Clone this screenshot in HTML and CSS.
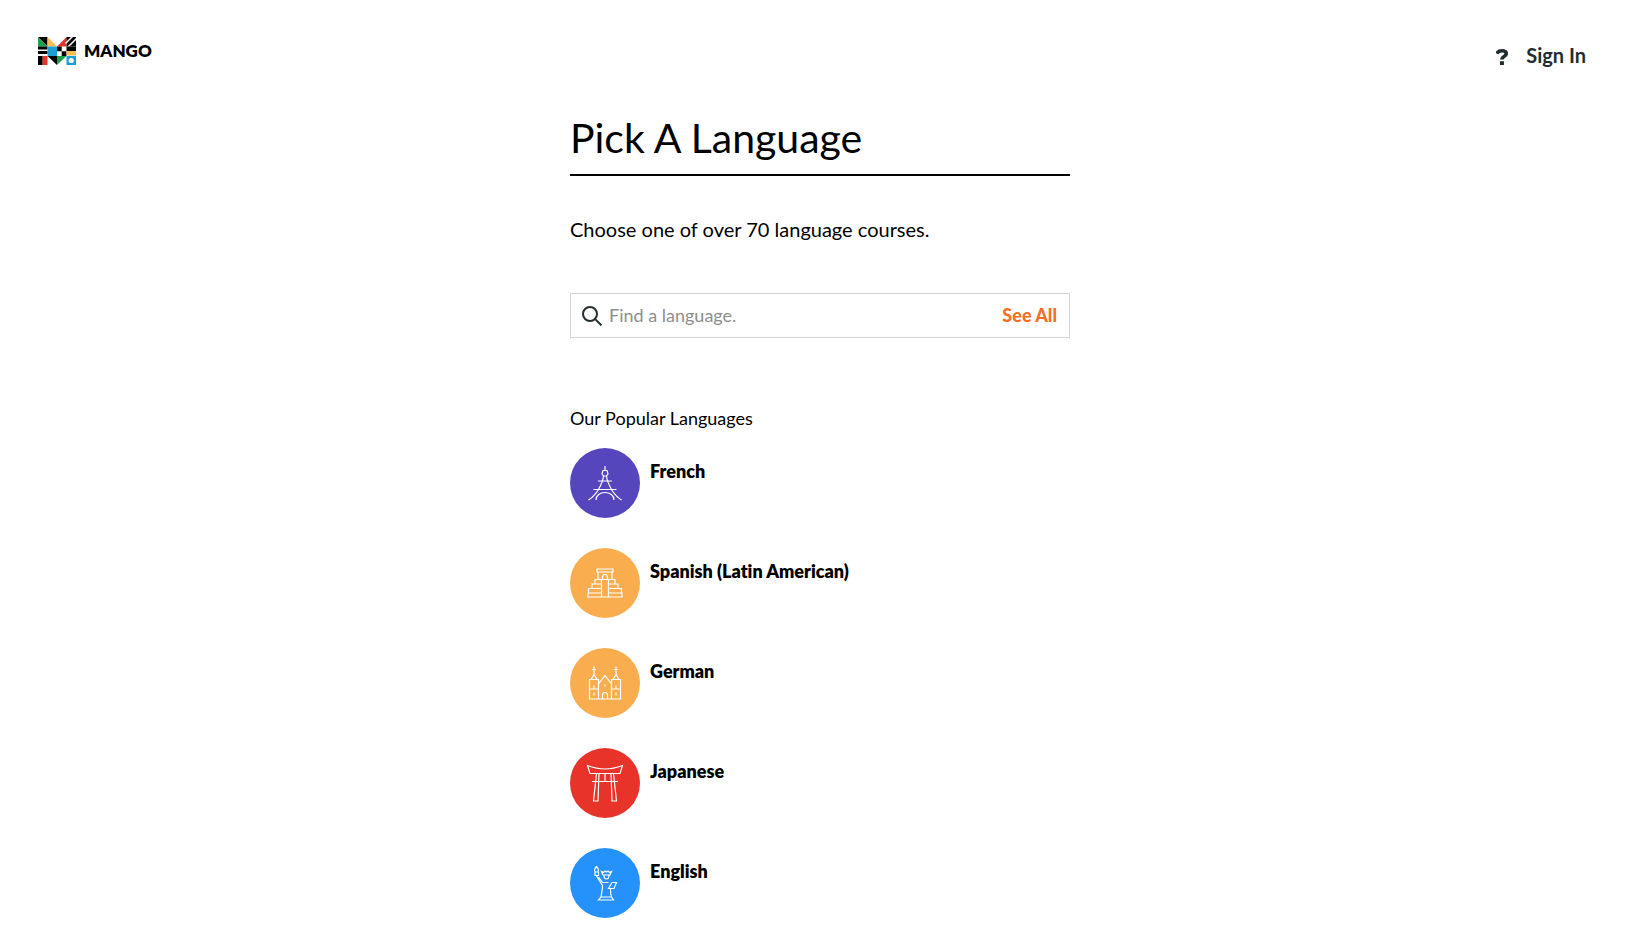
FILE: index.html
```
<!doctype html>
<html lang="en">
  <head>
    <title>Pick A Language</title>
    <meta name="viewport" content="width=device-width, initial-scale=1.0" />
    <meta charset="utf-8" />
    <link rel="stylesheet" href="styles.css">
  </head>
  <body>
    <header>
      <a class="logo" href="#">
        <svg width="38" height="28" viewBox="0 0 38 28" aria-hidden="true">
          <path d="M0 0h9.500v9.500z" />
          <path fill="#1fa04b" d="M0 0l9.500 9.500H0z" />
          <path fill="#fdbd56" d="M9.500 0l9.500 9.500H9.500z" />
          <path fill="#e8332a" d="M28.500 0v9.500H19z" />
          <path d="M28.500 0H38v9.500h-9.500z" />
          <path stroke="#fff" stroke-width="1.500" d="M27.500 6.500L34.500-.5M30 10L39 1" />
          <path d="M0 9.500h9.500v3H0zM0 14h9.500v3H0z" />
          <path fill="#1c9fd8" d="M9.500 9.500H19V19H9.500z" />
          <path d="M19 9.500h4.700v4.700H19zM23.700 14.200h4.800V19h-4.800z" />
          <path d="M28.500 9.500H38V14h-9.500z" />
          <path fill="#fdbd56" d="M28.500 14H38v4.500h-9.500z" />
          <path d="M0 19h4.700v9H0z" />
          <path fill="#e8332a" d="M4.700 19h4.800v9H4.700z" />
          <path d="M9.500 19H19v9z" />
          <path fill="#1fa04b" d="M19 19h9.500L19 28z" />
          <path fill="#1c9fd8" d="M28.500 19H38v9h-9.500z" />
          <circle cx="33.200" cy="23.500" r="2.600" fill="#fff" />
        </svg>
        <span>MANGO</span>
      </a>
      <nav>
        <a class="help" href="#" aria-label="Help">
          <svg width="12" height="16" viewBox="0 0 11 16" preserveAspectRatio="none">
            <path fill="none" stroke="#222d30" stroke-width="3.400" d="M.7 4.600C1.600 2.600 3.300 1.700 5.400 1.700c2.500 0 4 1.200 4 3 0 2.900-4 2.500-4 5.800" />
            <path fill="#222d30" d="M3.600 12.200h3.700V16H3.600z" />
          </svg>
        </a>
        <a class="sign-in" href="#">Sign In</a>
      </nav>
    </header>
    <main>
      <h1>Pick A Language</h1>
      <p class="intro">Choose one of over 70 language courses.</p>
      <form class="search">
        <svg width="20" height="20" viewBox="0 0 20 20" aria-hidden="true">
          <g fill="none" stroke="#222d30" stroke-width="2">
            <circle cx="8" cy="8" r="7" />
            <path d="M12.900 12.900l6.500 6.500" />
          </g>
        </svg>
        <input type="text" placeholder="Find a language." aria-label="Find a language" />
        <button type="button">See All</button>
      </form>
      <h2>Our Popular Languages</h2>
      <ul class="languages">
        <li>
          <a href="#">
            <svg class="purple" viewBox="0 0 70 70">
              <path d="M35 18v4M33 22.500h4l1 3.500-1.500 2h-3L32 26zM33.500 28c-.5 5-2.500 9-5 13.500-3 5-6 8-10 10.500M36.500 28c.5 5 2.500 9 5 13.500 3 5 6 8 10 10.500M28 33h14M23.500 41.500h23M26 52c0-4.500 4-7.500 9-7.500s9 3 9 7.500" />
            </svg>
            <span>French</span>
          </a>
        </li>
        <li>
          <a href="#">
            <svg class="orange" viewBox="0 0 70 70">
              <path d="M27 21h16v3H27zM28 24v7.500M42 24v7.500M31.500 49V31.500h7V49M32.500 31.500V29a2.500 2.500 0 0 1 5 0v2.500M31.500 31.500H25V36h-3v4.500h-3.500V45M38.500 31.500H45V36h3v4.500h3.500V45M25 36h6.500M22 40.500h9.500M38.500 36H45M38.500 40.500H48M18 45h13.500M38.500 45H52v4H18v-4" />
            </svg>
            <span>Spanish (Latin American)</span>
          </a>
        </li>
        <li>
          <a href="#">
            <svg class="orange" viewBox="0 0 70 70">
              <path d="M24 18.500v8M22 21.500h4M46 18.500v8M44 21.500h4M24 26.500l-3 5h6zM46 26.500l-3 5h6zM19.500 31.500h9V51h-9zM41.500 31.500h9V51h-9zM28.500 36L35 27.500l6.500 8.500M28.500 51h13M32.500 51v-4a2.500 2.500 0 0 1 5 0v4M19.500 41h9M41.500 41h9M24 37.500V41M46 37.500V41M24 44.500v3M46 44.500v3M35 36.500v2" />
            </svg>
            <span>German</span>
          </a>
        </li>
        <li>
          <a href="#">
            <svg class="red" viewBox="0 0 70 70">
              <path d="M17.500 17.500c6 2.300 11 3.500 17.500 3.500s11.500-1.200 17.500-3.500L50 25.500H20zM26.500 25.500L23.500 53h4.500l1-27.500M43.500 25.500l3 27.500H42l-1-27.500M22 33.500h26M35 25.500v8" />
            </svg>
            <span>Japanese</span>
          </a>
        </li>
        <li>
          <a href="#">
            <svg class="blue" viewBox="0 0 70 70">
              <path d="M26.500 18.500c1.500 1.500 2.300 2.500 2 4l-.8 1.500h-2.400l-.8-1.500c-.3-1.500.5-2.500 2-4zM25 24v3.500h3.500V24M26.500 28l6 9.500c0 4-1 8-1.500 11.500l-2.500 3h15l-2-3c-1-2.500-1-5-1-8M28.500 29l4 5.500h6M31.500 23.500l2 1 1.500-1.500 1.500 1 1.500-1 1.500 1.500 2-1L40 27h-7zM34 27c0 3 1 4 2.500 4s2.500-1 2.500-4M31 49h10.500M42 34.500h4.500l-2.500 6h-5.500z" />
            </svg>
            <span>English</span>
          </a>
        </li>
      </ul>
    </main>
  </body>
</html>
```
FILE: styles.css
```
* {
  box-sizing: border-box;
}

body {
  margin: 0;
  background: #fff;
  color: #000;
  font-family: Lato, "Liberation Sans", sans-serif;
  font-size: 18px;
  font-variant-ligatures: none;
  line-height: 24px;
}

a {
  color: inherit;
  text-decoration: none;
}

header {
  display: flex;
  justify-content: space-between;
  align-items: flex-start;
  padding: 36px 48px 0 38px;
  height: 108px;
}

.logo {
  display: flex;
  align-items: center;
  gap: 8px;
  height: 30px;
  font-size: 17px;
  font-weight: 800;
}

nav {
  display: flex;
  align-items: center;
  gap: 18px;
  padding-top: 7px;
  color: #222d30;
  font-size: 20px;
  font-weight: 700;
}

.help {
  display: flex;
  padding-top: 4px;
}

main {
  width: 506px;
  max-width: 100%;
  margin: 0 auto;
  padding-left: 6px;
}

h1 {
  margin: 0;
  padding: 5px 0 11px;
  border-bottom: 2px solid #000;
  font-size: 41px;
  font-weight: 400;
  line-height: 50px;
}

.intro {
  margin: 41px 0 52px;
  font-size: 20px;
}

.search {
  display: flex;
  align-items: center;
  height: 45px;
  padding: 0 12px 0 11px;
  border: 1px solid #d4d4d4;
}

.search input {
  flex: 1;
  min-width: 0;
  padding: 0 7px 2px;
  border: none;
  outline: none;
  background: none;
  font: inherit;
}

.search input::placeholder {
  color: #8e8e8e;
  opacity: 1;
}

.search button {
  padding: 0 0 2px;
  border: none;
  background: none;
  color: #f26f26;
  font: inherit;
  font-weight: 900;
  cursor: pointer;
}

h2 {
  margin: 68px 0 18px;
  font-size: 18px;
  font-weight: 400;
}

.languages {
  margin: 0;
  padding: 0;
  list-style: none;
}

.languages li {
  height: 100px;
}

.languages a {
  display: flex;
  gap: 10px;
  font-weight: 800;
}

.languages span {
  padding-top: 11px;
}

.languages svg {
  flex: none;
  width: 70px;
  height: 70px;
  border-radius: 50%;
  fill: none;
  stroke: #fff;
  stroke-width: 1.2;
}

.purple {
  background: #5546bd;
}

.orange {
  background: #f9ad4e;
}

.red {
  background: #e8332a;
}

.blue {
  background: #2492fa;
}
```
